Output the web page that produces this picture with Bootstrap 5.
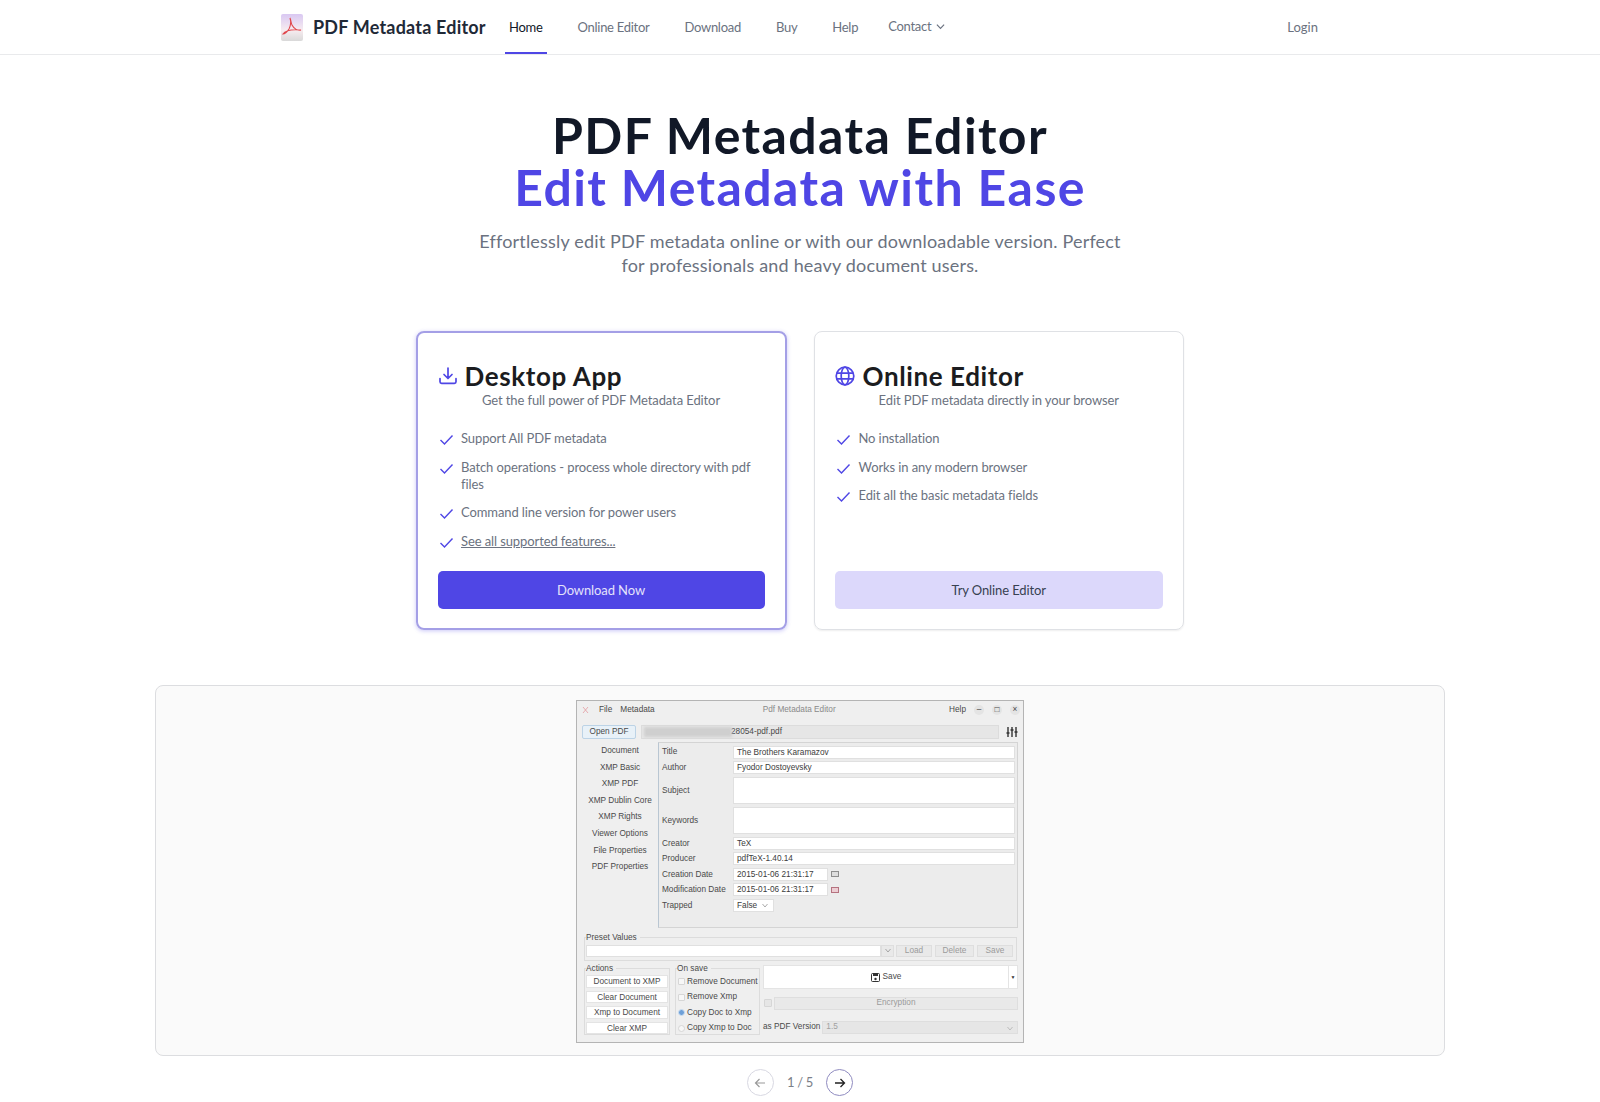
<!DOCTYPE html>
<html lang="en">
<head>
  <meta charset="UTF-8" />
  <meta name="viewport" content="width=device-width, initial-scale=1">
  <title>PDF Metadata Editor</title>
  <link href="https://cdn.jsdelivr.net/npm/bootstrap@5.3.0/dist/css/bootstrap.min.css" rel="stylesheet" />
  <style>
    body { font-family: Lato, "Noto Sans", sans-serif; color: #6b7280; background: #fff; overflow-x: hidden; }
    .top-bar { height: 55px; border-bottom: 1px solid #e9eaec; padding-left: 281px; padding-right: 278px; }
    .logo-box { width: 22px; height: 27px; margin-right: 10px; }
    .brand-name { font-size: 18px; font-weight: 700; color: #1f2937; letter-spacing: .2px; width: 192px; }
    .menu-link { height: 54px; font-size: 13px; color: #6b7280; text-decoration: none; display: flex; align-items: center; margin-right: 27px; padding: 1px 4px 0; letter-spacing: -.28px; }
    .menu-link.on { color: #111827; border-bottom: 2px solid #4f46e5; padding-top: 3px; }
    .menu-link.up { padding-bottom: 2px; margin-left: -5px; }
    .menu-link.up svg { margin-left: 5px; }
    .menu-link.end { letter-spacing: 0; }
    .hero-title { font-size: 50px; line-height: 52px; font-weight: 700; color: #111827; margin: 54px 0 0; letter-spacing: 1.4px; }
    .hero-title span { color: #4f46e5; display: block; }
    .hero-text { font-size: 18px; line-height: 24px; width: 660px; margin: 16px auto 0; letter-spacing: .18px; }
    .plan-row { width: 768px; margin: 54px auto 0; gap: 27px; }
    .plan-box { width: 370.5px; height: 299px; border: 1px solid #dfe1e5; border-radius: 8px; padding: 30px 20px 20px; box-shadow: 0 1px 2px rgba(0,0,0,.07); }
    .plan-box.hot { border: 2px solid #a49fe6; padding: 29px 20px 19px 19.5px; box-shadow: 0 1px 4px rgba(79,70,229,.3); }
    .plan-head { font-size: 26px; line-height: 28px; font-weight: 700; color: #1b1c20; margin: 0; letter-spacing: .6px; gap: 8px; }
    .hot .plan-head { gap: 7px; }
    .plan-sub { font-size: 13px; line-height: 20px; text-align: center; letter-spacing: -.1px; margin-top: 0; }
    .tick-list { list-style: none; margin: 20px 0 0; padding: 0; font-size: 13px; line-height: 17px; letter-spacing: -.1px; }
    .tick-list li { display: flex; gap: 8px; margin-bottom: 11.7px; padding-left: 1px; }
    .hot .tick-list li { gap: 7.5px; }
    .tick-list svg { flex: none; margin-top: 2px; }
    .tick-list a { color: #6b7280; }
    .plan-btn { height: 38px; width: 100%; font-size: 13px; border-radius: 5px; border: 0; letter-spacing: -.1px; padding-top: 3px; }
    .plan-btn.solid { background: #4f46e5; color: #e4e2fb; }
    .plan-btn.soft { background: #dcd8fb; color: #374151; }
    .shot-frame { width: 1290px; height: 371px; margin: 55px auto 0; background: #fafafa; border: 1px solid #dcdde0; border-radius: 8px; padding-top: 14px; }
    .pager { margin-top: 13px; gap: 13px; font-size: 13px; color: #7b8088; letter-spacing: -.3px; }
    .pager-btn { width: 27px; height: 27px; border-radius: 50%; border: 1px solid #d8d8e2; background: #fff; padding: 0; }
    .pager-btn.next { border-color: #8f8bc0; }

    /* the app screenshot inside the frame */
    .app-win { width: 448px; height: 343px; background: #efefef; border: 1px solid #b4b4b4; font-family: "Liberation Sans", sans-serif; font-size: 8.25px; color: #4a4a4a; padding: 0 5px; }
    .app-title { height: 18px; margin-bottom: 6px; }
    .app-title b { font-weight: 400; margin-left: 10px; }
    .app-title .mid { color: #8a8a8a; margin-left: 42px; width: 205px; }
    .win-dot { width: 10px; height: 10px; background: #e4e4e4; border-radius: 50%; text-align: center; line-height: 9px; margin-left: 8px; }
    .win-dots { margin-right: -2px; }
    .open-btn { width: 54px; height: 14px; background: #e8f1f8; border: 1px solid #bcd3e6; border-radius: 2px; text-align: center; line-height: 12px; margin-right: 5px; }
    .path-box { width: 358px; height: 14px; background: #e6e6e6; border: 1px solid #dcdcdc; line-height: 12px; padding-left: 89px; position: relative; }
    .path-blur { position: absolute; left: 2px; top: 1px; width: 88px; height: 10px; background: #cfcfcf; filter: blur(1.5px); }
    .set-ico { margin-left: 7px; }
    .app-body { margin-top: 3px; }
    .side-tabs { width: 76px; text-align: center; padding-top: 1px; }
    .side-tabs div { height: 16.6px; line-height: 16.6px; white-space: nowrap; }
    .form-panel { width: 360px; height: 186px; border: 1px solid #d4d4d4; border-left: 1px solid #b9c6d2; background: #ececec; padding: 2.5px 2px 0 3px; }
    .form-line { display: flex; align-items: center; height: 13px; margin-bottom: 2.6px; }
    .form-line.tall { height: 27px; margin-bottom: 3px; }
    .form-line label { width: 71px; flex: none; white-space: nowrap; padding-top: 1px; }
    .fld { flex: 1; height: 100%; background: #fff; border: 1px solid #e0e0e0; padding-left: 3px; line-height: 11px; color: #3c3c3c; }
    .fld.date { flex: none; width: 95px; }
    .fld.pick { flex: none; width: 41px; }
    .cal-ico { width: 8px; height: 6px; border: 1px solid #8d8d8d; background: #ddd; margin-left: 3px; }
    .cal-ico.red { border-color: #b5727f; background: #eccdd3; }
    .chev { margin-left: 5px; vertical-align: 0; }
    .group-box { border: 1px solid #dcdcdc; position: relative; }
    .group-box > em { position: absolute; font-style: normal; background: #efefef; left: 1px; top: -5px; padding-right: 3px; line-height: 10px; }
    .preset-box { height: 24px; margin: 9px 1px 0 2px; padding: 7px 3px 0 1px; }
    .grey-btn { height: 12px; background: #e9e9e9; border: 1px solid #dedede; color: #9b9b9b; text-align: center; line-height: 10px; }
    .grey-btn + .grey-btn { margin-left: 3px; }
    .lower-part { margin-top: 7px; margin-left: 2px; }
    .act-box { width: 86px; height: 67px; padding: 6px 1px 0; }
    .act-box div.act { height: 12.5px; line-height: 11px; background: #fff; border: 1px solid #e4e4e4; text-align: center; margin-bottom: 3.1px; white-space: nowrap; }
    .save-box { width: 85px; height: 67px; margin-left: 5px; padding: 5px 0 0 2px; }
    .opt-line { height: 15.6px; display: flex; align-items: center; gap: 2px; white-space: nowrap; }
    .opt-mark { width: 7px; height: 7px; background: #f7f7f7; border: 1px solid #d6d6d6; border-radius: 1px; flex: none; }
    .opt-mark.round { border-radius: 50%; }
    .opt-mark.sel { background: #6ea0d8; border-color: #cfe0f2; }
    .opt-mark.off { background: #e6e6e6; width: 8px; height: 8px; margin-left: 1px; }
    .save-side { width: 255px; margin-left: 3px; margin-top: -3px; }
    .save-big { height: 24px; background: #fff; border: 1px solid #e4e4e4; width: 246px; gap: 3px; }
    .save-drop { height: 24px; width: 9px; background: #fff; border: 1px solid #e4e4e4; border-left: 0; color: #333; font-size: 5px; line-height: 22px; text-align: center; }
    .enc-line { margin-top: 8px; height: 12.5px; }
    .enc-btn { flex: 1; height: 12.5px; background: #e9e9e9; border: 1px solid #dedede; color: #9b9b9b; text-align: center; line-height: 10px; margin-left: 2px; }
    .ver-line { margin-top: 11.5px; height: 12.5px; }
    .ver-sel { flex: 1; height: 12.5px; background: #e6e6e6; border: 1px solid #dedede; color: #a0a0a0; padding-left: 3px; line-height: 10px; margin-left: 2px; }
  </style>
</head>
<body>
  <nav class="top-bar d-flex align-items-center">
    <svg class="logo-box" viewBox="0 0 22 27">
      <defs><linearGradient id="lg" x1="0" y1="0" x2="0" y2="1"><stop offset="0" stop-color="#d9c8f2"/><stop offset=".6" stop-color="#f7ecf0"/><stop offset="1" stop-color="#d9d9d9"/></linearGradient></defs>
      <rect width="22" height="27" rx="2" fill="url(#lg)"/>
      <path d="M9 4c1 3 1 7-1 11-2 3-5 5-6 5 2-3 8-5 18-4-3 1-7-1-9-5-1-2-1-5-2-7z" fill="none" stroke="#e0474c" stroke-width="1.1"/>
    </svg>
    <span class="brand-name">PDF Metadata Editor</span>
    <a class="menu-link on" href="#">Home</a>
    <a class="menu-link" href="#">Online Editor</a>
    <a class="menu-link" href="#">Download</a>
    <a class="menu-link" href="#">Buy</a>
    <a class="menu-link" href="#">Help</a>
    <a class="menu-link up" href="#">Contact
      <svg width="9" height="9" viewBox="0 0 10 10" fill="none" stroke="#6b7280" stroke-width="1.3"><path d="M1 3l4 4 4-4"/></svg>
    </a>
    <a class="menu-link end ms-auto me-0" href="#">Login</a>
  </nav>

  <header class="text-center">
    <h1 class="hero-title">PDF Metadata Editor<span>Edit Metadata with Ease</span></h1>
    <p class="hero-text">Effortlessly edit PDF metadata online or with our downloadable version. Perfect for professionals and heavy document users.</p>
  </header>

  <section class="plan-row d-flex">
    <div class="plan-box hot d-flex flex-column">
      <h2 class="plan-head d-flex align-items-center">
        <svg width="20" height="20" viewBox="0 0 20 20" fill="none" stroke="#4f46e5" stroke-width="1.7" stroke-linecap="round" stroke-linejoin="round"><path d="M10 2v10M6 8.5l4 4 4-4M2 12.5v3.2c0 .9.7 1.6 1.6 1.6h12.8c.9 0 1.6-.7 1.6-1.6v-3.2"/></svg>
        Desktop App
      </h2>
      <div class="plan-sub">Get the full power of PDF Metadata Editor</div>
      <ul class="tick-list">
        <li><svg width="15" height="15" viewBox="0 0 15 15" fill="none" stroke="#4f46e5" stroke-width="1.4"><path d="M1.5 8l4 4 8-8.5"/></svg>Support All PDF metadata</li>
        <li><svg width="15" height="15" viewBox="0 0 15 15" fill="none" stroke="#4f46e5" stroke-width="1.4"><path d="M1.5 8l4 4 8-8.5"/></svg><span>Batch operations - process whole directory with pdf files</span></li>
        <li><svg width="15" height="15" viewBox="0 0 15 15" fill="none" stroke="#4f46e5" stroke-width="1.4"><path d="M1.5 8l4 4 8-8.5"/></svg>Command line version for power users</li>
        <li><svg width="15" height="15" viewBox="0 0 15 15" fill="none" stroke="#4f46e5" stroke-width="1.4"><path d="M1.5 8l4 4 8-8.5"/></svg><a href="#">See all supported features...</a></li>
      </ul>
      <button class="plan-btn solid mt-auto">Download Now</button>
    </div>
    <div class="plan-box d-flex flex-column">
      <h2 class="plan-head d-flex align-items-center">
        <svg width="20" height="20" viewBox="0 0 20 20" fill="none" stroke="#4f46e5" stroke-width="1.7"><circle cx="10" cy="10" r="8.8"/><ellipse cx="10" cy="10" rx="3.8" ry="8.8"/><path d="M1.8 7.2h16.4M1.8 12.8h16.4"/></svg>
        Online Editor
      </h2>
      <div class="plan-sub">Edit PDF metadata directly in your browser</div>
      <ul class="tick-list">
        <li><svg width="15" height="15" viewBox="0 0 15 15" fill="none" stroke="#4f46e5" stroke-width="1.4"><path d="M1.5 8l4 4 8-8.5"/></svg>No installation</li>
        <li><svg width="15" height="15" viewBox="0 0 15 15" fill="none" stroke="#4f46e5" stroke-width="1.4"><path d="M1.5 8l4 4 8-8.5"/></svg>Works in any modern browser</li>
        <li><svg width="15" height="15" viewBox="0 0 15 15" fill="none" stroke="#4f46e5" stroke-width="1.4"><path d="M1.5 8l4 4 8-8.5"/></svg>Edit all the basic metadata fields</li>
      </ul>
      <button class="plan-btn soft mt-auto">Try Online Editor</button>
    </div>
  </section>

  <section class="shot-frame d-flex justify-content-center">
    <div class="app-win">
      <div class="app-title d-flex align-items-center">
        <svg width="7" height="8" viewBox="0 0 7 8" fill="none" stroke="#e39aa0" stroke-width=".8"><path d="M1 1l5 6M6 1L1 7"/></svg>
        <b>File</b><b class="ms-2">Metadata</b>
        <span class="mid text-center">Pdf Metadata Editor</span>
        <span class="ms-auto win-dots d-flex align-items-center">Help<span class="win-dot">&#8211;</span><span class="win-dot">&#9633;</span><span class="win-dot">&#215;</span></span>
      </div>
      <div class="d-flex align-items-center">
        <div class="open-btn">Open PDF</div>
        <div class="path-box"><span class="path-blur"></span>28054-pdf.pdf</div>
        <svg class="set-ico" width="12" height="12" viewBox="0 0 12 12" stroke="#333" stroke-width="1.4"><path d="M2 1v10M6 1v10M10 1v10"/><path d="M.5 7h3M4.5 4h3M8.5 6h3" stroke-width="1.6"/></svg>
      </div>
      <div class="app-body d-flex">
        <div class="side-tabs">
          <div>Document</div><div>XMP Basic</div><div>XMP PDF</div><div>XMP Dublin Core</div><div>XMP Rights</div><div>Viewer Options</div><div>File Properties</div><div>PDF Properties</div>
        </div>
        <div class="form-panel">
          <div class="form-line"><label>Title</label><div class="fld">The Brothers Karamazov</div></div>
          <div class="form-line"><label>Author</label><div class="fld">Fyodor Dostoyevsky</div></div>
          <div class="form-line tall"><label>Subject</label><div class="fld"></div></div>
          <div class="form-line tall"><label>Keywords</label><div class="fld"></div></div>
          <div class="form-line"><label>Creator</label><div class="fld">TeX</div></div>
          <div class="form-line"><label>Producer</label><div class="fld">pdfTeX-1.40.14</div></div>
          <div class="form-line"><label>Creation Date</label><div class="fld date">2015-01-06 21:31:17</div><span class="cal-ico"></span></div>
          <div class="form-line"><label>Modification Date</label><div class="fld date">2015-01-06 21:31:17</div><span class="cal-ico red"></span></div>
          <div class="form-line"><label>Trapped</label><div class="fld pick">False<svg class="chev" width="6" height="5" viewBox="0 0 6 5" fill="none" stroke="#888" stroke-width=".7"><path d="M.5 1l2.5 3 2.5-3"/></svg></div></div>
        </div>
      </div>
      <div class="group-box preset-box d-flex">
        <em>Preset Values</em>
        <div class="fld" style="height:12px"></div>
        <div class="grey-btn" style="width:13px;margin-right:-1px"><svg width="6" height="5" viewBox="0 0 6 5" fill="none" stroke="#888" stroke-width=".7"><path d="M.5 1l2.5 3 2.5-3"/></svg></div>
        <div class="grey-btn" style="width:36px">Load</div>
        <div class="grey-btn" style="width:39px">Delete</div>
        <div class="grey-btn" style="width:36px">Save</div>
      </div>
      <div class="lower-part d-flex">
        <div class="group-box act-box">
          <em>Actions</em>
          <div class="act">Document to XMP</div><div class="act">Clear Document</div><div class="act">Xmp to Document</div><div class="act">Clear XMP</div>
        </div>
        <div class="group-box save-box">
          <em>On save</em>
          <div class="opt-line"><span class="opt-mark"></span>Remove Document</div>
          <div class="opt-line"><span class="opt-mark"></span>Remove Xmp</div>
          <div class="opt-line"><span class="opt-mark round sel"></span>Copy Doc to Xmp</div>
          <div class="opt-line"><span class="opt-mark round"></span>Copy Xmp to Doc</div>
        </div>
        <div class="save-side">
          <div class="d-flex">
            <div class="save-big d-flex align-items-center justify-content-center">
              <svg width="9" height="9" viewBox="0 0 9 9"><rect x=".5" y=".5" width="8" height="8" rx="1" fill="#fff" stroke="#333"/><rect x="2" y="1" width="5" height="2" fill="#333"/><circle cx="4.5" cy="6" r="1.2" fill="#333"/></svg>
              <span>Save</span>
            </div>
            <div class="save-drop">&#9660;</div>
          </div>
          <div class="enc-line d-flex align-items-center"><span class="opt-mark off"></span><div class="enc-btn">Encryption</div></div>
          <div class="ver-line d-flex align-items-center"><span class="text-nowrap">as PDF Version</span><div class="ver-sel d-flex justify-content-between"><span>1.5</span><svg class="me-1 mt-1" width="6" height="5" viewBox="0 0 6 5" fill="none" stroke="#aaa" stroke-width=".7"><path d="M.5 1l2.5 3 2.5-3"/></svg></div></div>
        </div>
      </div>
    </div>
  </section>

  <div class="pager d-flex align-items-center justify-content-center">
    <button class="pager-btn"><svg width="12" height="12" viewBox="0 0 12 12" fill="none" stroke="#9a9a9a" stroke-width="1.2"><path d="M11 6H1.5M5.5 2L1.5 6l4 4"/></svg></button>
    <span>1 / 5</span>
    <button class="pager-btn next"><svg width="12" height="12" viewBox="0 0 12 12" fill="none" stroke="#222" stroke-width="1.3"><path d="M1 6h9.5M6.5 2l4 4-4 4"/></svg></button>
  </div>
</body>
</html>
